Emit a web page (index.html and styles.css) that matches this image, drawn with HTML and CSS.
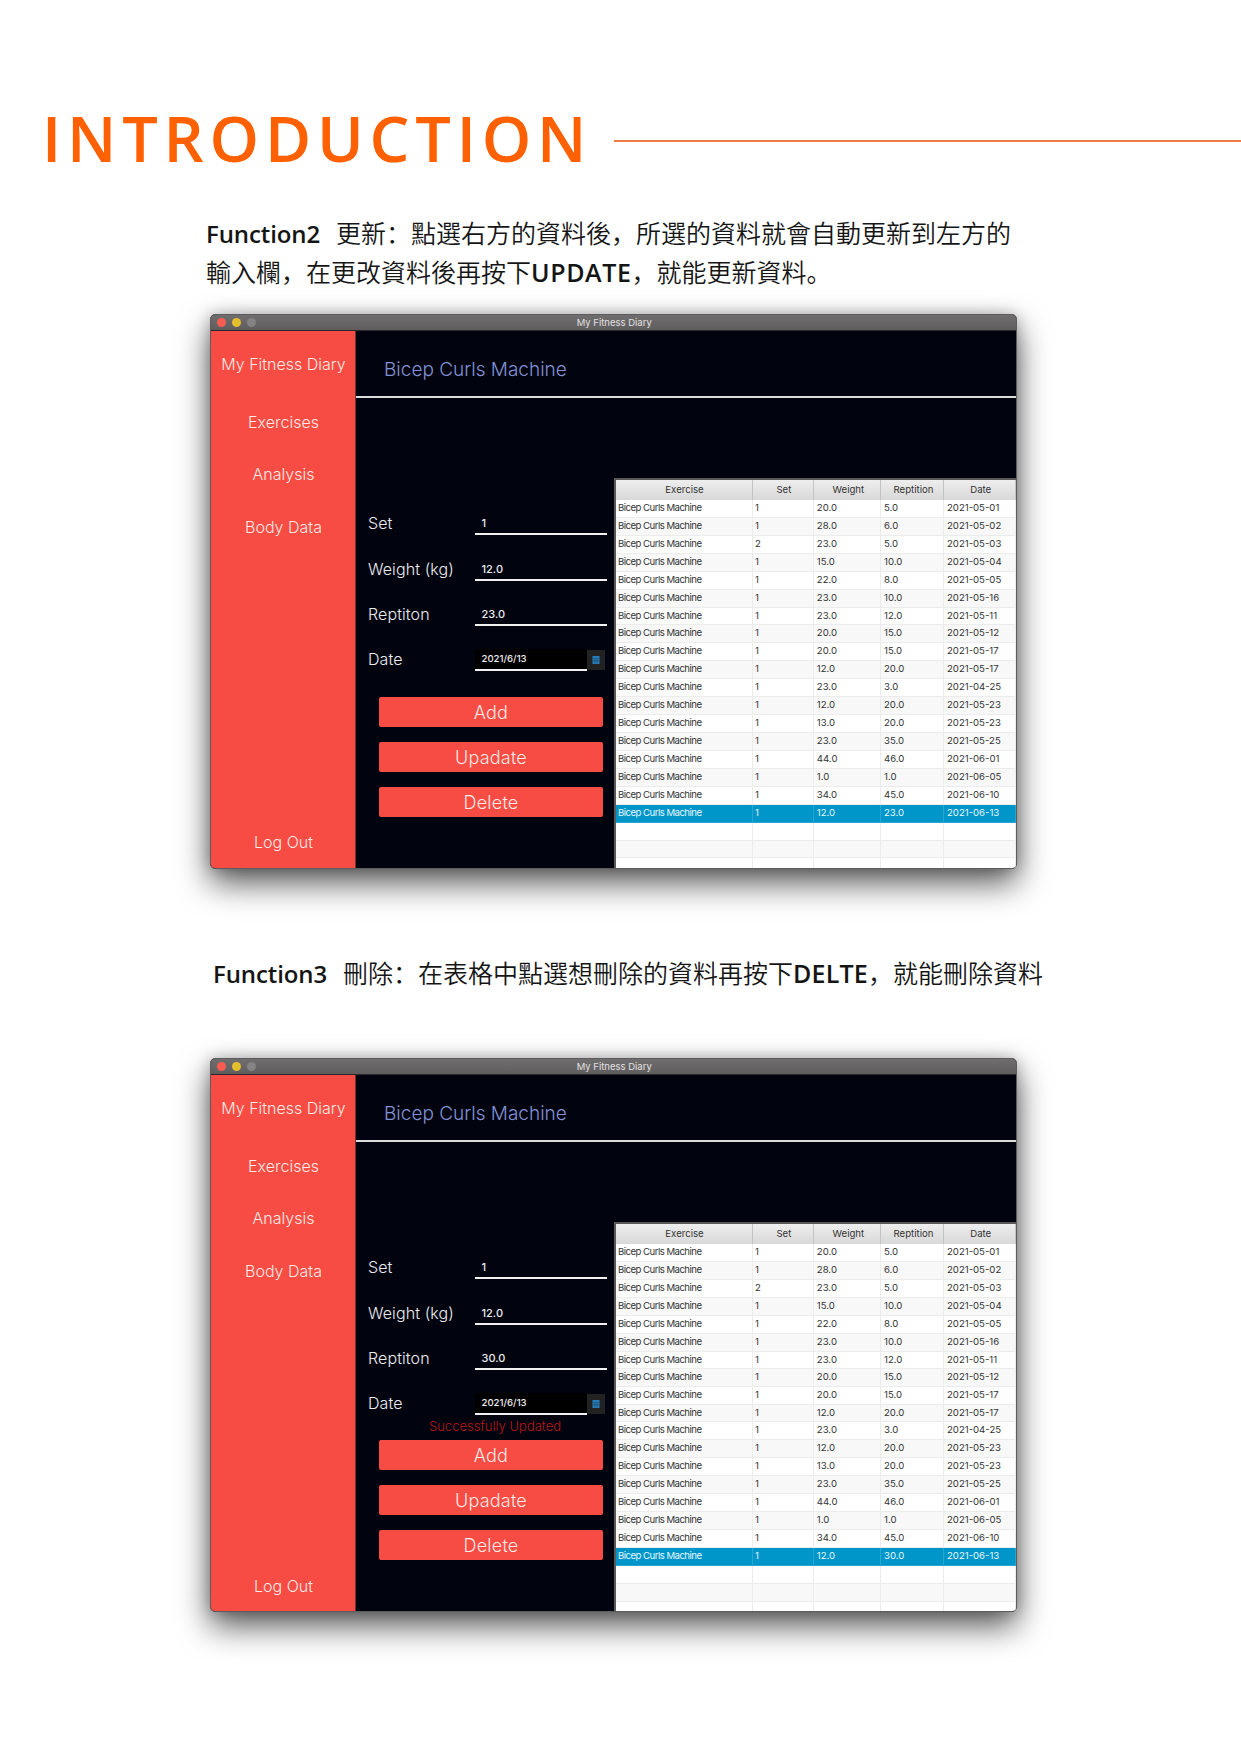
FILE: index.html
```
<!DOCTYPE html>
<html lang="zh-Hans">
<head>
<meta charset="utf-8">
<title>Introduction</title>
<link rel="stylesheet" href="styles.css">
</head>
<body>
<header class="heading"><h1>INTRODUCTION</h1><div class="rule"></div></header>

<p class="caption first"><span class="line"><b class="fn">Function2</b>更新：點選右方的資料後，所選的資料就會自動更新到左方的</span><span class="line">輸入欄，在更改資料後再按下<b class="update">UPDATE</b>，就能更新資料。</span></p>

<section class="window">
  <div class="titlebar"><i class="dot red"></i><i class="dot yellow"></i><i class="dot gray"></i><span class="title">My Fitness Diary</span></div>
  <div class="body">
    <nav class="sidebar"><a class="brand">My Fitness Diary</a><a>Exercises</a><a>Analysis</a><a>Body Data</a><a class="logout">Log Out</a></nav>
    <main class="main">
      <h2><span>Bicep Curls Machine</span></h2>
      <div class="content">
        <div class="form">
          <div class="field"><label>Set</label><span class="input">1</span></div>
          <div class="field"><label>Weight (kg)</label><span class="input">12.0</span></div>
          <div class="field"><label>Reptiton</label><span class="input">23.0</span></div>
          <div class="field date"><label>Date</label><span class="input">2021/6/13</span><span class="picker"><svg width="8" height="8" viewBox="0 0 8 8"><path fill="#267fbd" d="M.5 0h7v8h-7z"/><path stroke="#1c4868" stroke-width=".6" d="M1 2.4h6M1 4.8h6M3 2.4V7.5M5.2 2.4V7.5"/></svg></span></div>
          <p class="status"></p>
          <div class="button">Add</div><div class="button">Upadate</div><div class="button">Delete</div>
        </div>
        <table class="log">
          <thead><tr><th>Exercise</th><th>Set</th><th>Weight</th><th>Reptition</th><th>Date</th></tr></thead>
          <tbody>
            <tr><td>Bicep Curls Machine</td><td>1</td><td>20.0</td><td>5.0</td><td>2021-05-01</td></tr>
            <tr><td>Bicep Curls Machine</td><td>1</td><td>28.0</td><td>6.0</td><td>2021-05-02</td></tr>
            <tr><td>Bicep Curls Machine</td><td>2</td><td>23.0</td><td>5.0</td><td>2021-05-03</td></tr>
            <tr><td>Bicep Curls Machine</td><td>1</td><td>15.0</td><td>10.0</td><td>2021-05-04</td></tr>
            <tr><td>Bicep Curls Machine</td><td>1</td><td>22.0</td><td>8.0</td><td>2021-05-05</td></tr>
            <tr><td>Bicep Curls Machine</td><td>1</td><td>23.0</td><td>10.0</td><td>2021-05-16</td></tr>
            <tr><td>Bicep Curls Machine</td><td>1</td><td>23.0</td><td>12.0</td><td>2021-05-11</td></tr>
            <tr><td>Bicep Curls Machine</td><td>1</td><td>20.0</td><td>15.0</td><td>2021-05-12</td></tr>
            <tr><td>Bicep Curls Machine</td><td>1</td><td>20.0</td><td>15.0</td><td>2021-05-17</td></tr>
            <tr><td>Bicep Curls Machine</td><td>1</td><td>12.0</td><td>20.0</td><td>2021-05-17</td></tr>
            <tr><td>Bicep Curls Machine</td><td>1</td><td>23.0</td><td>3.0</td><td>2021-04-25</td></tr>
            <tr><td>Bicep Curls Machine</td><td>1</td><td>12.0</td><td>20.0</td><td>2021-05-23</td></tr>
            <tr><td>Bicep Curls Machine</td><td>1</td><td>13.0</td><td>20.0</td><td>2021-05-23</td></tr>
            <tr><td>Bicep Curls Machine</td><td>1</td><td>23.0</td><td>35.0</td><td>2021-05-25</td></tr>
            <tr><td>Bicep Curls Machine</td><td>1</td><td>44.0</td><td>46.0</td><td>2021-06-01</td></tr>
            <tr><td>Bicep Curls Machine</td><td>1</td><td>1.0</td><td>1.0</td><td>2021-06-05</td></tr>
            <tr><td>Bicep Curls Machine</td><td>1</td><td>34.0</td><td>45.0</td><td>2021-06-10</td></tr>
            <tr class="selected"><td>Bicep Curls Machine</td><td>1</td><td>12.0</td><td>23.0</td><td>2021-06-13</td></tr>
            <tr><td></td><td></td><td></td><td></td><td></td></tr>
            <tr><td></td><td></td><td></td><td></td><td></td></tr>
            <tr><td></td><td></td><td></td><td></td><td></td></tr>
          </tbody>
        </table>
      </div>
    </main>
  </div>
</section>

<p class="caption second"><span class="line"><b class="fn">Function3</b>刪除：在表格中點選想刪除的資料再按下<b class="delte">DELTE</b>，就能刪除資料</span></p>

<section class="window updated">
  <div class="titlebar"><i class="dot red"></i><i class="dot yellow"></i><i class="dot gray"></i><span class="title">My Fitness Diary</span></div>
  <div class="body">
    <nav class="sidebar"><a class="brand">My Fitness Diary</a><a>Exercises</a><a>Analysis</a><a>Body Data</a><a class="logout">Log Out</a></nav>
    <main class="main">
      <h2><span>Bicep Curls Machine</span></h2>
      <div class="content">
        <div class="form">
          <div class="field"><label>Set</label><span class="input">1</span></div>
          <div class="field"><label>Weight (kg)</label><span class="input">12.0</span></div>
          <div class="field"><label>Reptiton</label><span class="input">30.0</span></div>
          <div class="field date"><label>Date</label><span class="input">2021/6/13</span><span class="picker"><svg width="8" height="8" viewBox="0 0 8 8"><path fill="#267fbd" d="M.5 0h7v8h-7z"/><path stroke="#1c4868" stroke-width=".6" d="M1 2.4h6M1 4.8h6M3 2.4V7.5M5.2 2.4V7.5"/></svg></span></div>
          <p class="status">Successfully Updated</p>
          <div class="button">Add</div><div class="button">Upadate</div><div class="button">Delete</div>
        </div>
        <table class="log">
          <thead><tr><th>Exercise</th><th>Set</th><th>Weight</th><th>Reptition</th><th>Date</th></tr></thead>
          <tbody>
            <tr><td>Bicep Curls Machine</td><td>1</td><td>20.0</td><td>5.0</td><td>2021-05-01</td></tr>
            <tr><td>Bicep Curls Machine</td><td>1</td><td>28.0</td><td>6.0</td><td>2021-05-02</td></tr>
            <tr><td>Bicep Curls Machine</td><td>2</td><td>23.0</td><td>5.0</td><td>2021-05-03</td></tr>
            <tr><td>Bicep Curls Machine</td><td>1</td><td>15.0</td><td>10.0</td><td>2021-05-04</td></tr>
            <tr><td>Bicep Curls Machine</td><td>1</td><td>22.0</td><td>8.0</td><td>2021-05-05</td></tr>
            <tr><td>Bicep Curls Machine</td><td>1</td><td>23.0</td><td>10.0</td><td>2021-05-16</td></tr>
            <tr><td>Bicep Curls Machine</td><td>1</td><td>23.0</td><td>12.0</td><td>2021-05-11</td></tr>
            <tr><td>Bicep Curls Machine</td><td>1</td><td>20.0</td><td>15.0</td><td>2021-05-12</td></tr>
            <tr><td>Bicep Curls Machine</td><td>1</td><td>20.0</td><td>15.0</td><td>2021-05-17</td></tr>
            <tr><td>Bicep Curls Machine</td><td>1</td><td>12.0</td><td>20.0</td><td>2021-05-17</td></tr>
            <tr><td>Bicep Curls Machine</td><td>1</td><td>23.0</td><td>3.0</td><td>2021-04-25</td></tr>
            <tr><td>Bicep Curls Machine</td><td>1</td><td>12.0</td><td>20.0</td><td>2021-05-23</td></tr>
            <tr><td>Bicep Curls Machine</td><td>1</td><td>13.0</td><td>20.0</td><td>2021-05-23</td></tr>
            <tr><td>Bicep Curls Machine</td><td>1</td><td>23.0</td><td>35.0</td><td>2021-05-25</td></tr>
            <tr><td>Bicep Curls Machine</td><td>1</td><td>44.0</td><td>46.0</td><td>2021-06-01</td></tr>
            <tr><td>Bicep Curls Machine</td><td>1</td><td>1.0</td><td>1.0</td><td>2021-06-05</td></tr>
            <tr><td>Bicep Curls Machine</td><td>1</td><td>34.0</td><td>45.0</td><td>2021-06-10</td></tr>
            <tr class="selected"><td>Bicep Curls Machine</td><td>1</td><td>12.0</td><td>30.0</td><td>2021-06-13</td></tr>
            <tr><td></td><td></td><td></td><td></td><td></td></tr>
            <tr><td></td><td></td><td></td><td></td><td></td></tr>
            <tr><td></td><td></td><td></td><td></td><td></td></tr>
          </tbody>
        </table>
      </div>
    </main>
  </div>
</section>
</body>
</html>
```
FILE: styles.css
```
* { box-sizing: border-box; }
html, body { margin: 0; }
body {
  height: 1755px;
  padding-top: 100px;
  overflow: hidden;
  background: #fff;
  font-family: Inter, "Noto Sans CJK TC", sans-serif;
}
.heading { display: flex; align-items: center; height: 80px; padding-left: 42px; }
h1 {
  flex: none;
  width: 571.5px;
  margin: -4px 0 0;
  color: #ff6002;
  font: 600 63px/80px "Open Sans", sans-serif;
  letter-spacing: 5.8px;
  white-space: nowrap;
}
.rule { flex: 1; height: 2px; margin-top: 2px; background: #ed7d43; }

.caption { margin: 0; color: #151515; font: 350 25px/39px "Noto Sans CJK SC", sans-serif; }
.caption .line { display: block; height: 39px; white-space: nowrap; }
.caption b { font-family: "Open Sans", sans-serif; font-weight: 600; font-size: 24px; }
.caption .fn { display: inline-block; width: 130px; letter-spacing: -.1px; }
.caption .update { font-size: 25px; letter-spacing: .6px; }
.caption .delte { font-size: 25px; letter-spacing: .2px; }
.caption.first { height: 134px; padding: 33px 0 0 206px; }
.caption.second { height: 189px; padding: 84px 0 0 213px; }

.window {
  width: 807px;
  height: 555px;
  margin-left: 210px;
  overflow: hidden;
  border: 1px solid #5d5b5d;
  border-radius: 5px;
  background: #01040f;
  box-shadow: 0 14px 32px rgba(0, 0, 0, .66), 0 0 14px rgba(0, 0, 0, .22);
}
.window.updated { height: 554px; }
.titlebar {
  display: flex;
  align-items: center;
  gap: 6px;
  height: 16px;
  padding-left: 5.5px;
  border-bottom: 1px solid #2c2626;
  background: linear-gradient(#706d6e, #605d5e);
}
.dot { flex: none; width: 9px; height: 9px; border-radius: 50%; }
.red { background: #fb5b50; }
.yellow { background: #e3bf2e; }
.gray { background: #858384; }
.title { flex: 1; padding-right: 49px; text-align: center; color: #e2e0e1; font-size: 9.5px; line-height: 15px; }
.body { display: flex; height: 537px; }
.sidebar {
  display: flex;
  flex-direction: column;
  flex: none;
  width: 145px;
  padding: 65.5px 0 0 1px;
  border-right: 1px solid #7a2a2b;
  background: #f74c43;
  color: #ffe9e6;
  font-size: 16px;
  font-weight: 300;
  text-align: center;
}
.sidebar a { height: 52.3px; line-height: 52px; white-space: nowrap; }
.sidebar .brand { margin-top: -58.5px; height: 58px; }
.sidebar .logout { margin-top: auto; }
.main { flex: 1; min-width: 0; }
h2 {
  height: 67px;
  margin: 0;
  padding-left: 28px;
  border-bottom: 2px solid #dcdcdf;
  color: #8392d6;
  font-size: 19px;
  font-weight: 300;
  line-height: 77px;
}
.content { display: flex; height: 470px; }
.form { flex: none; width: 257.5px; padding: 96px 0 0 12px; color: #ececef; }
.field { display: flex; align-items: flex-end; height: 45.8px; }
.field.date { height: 44.8px; }
.field label { width: 106.5px; height: 34px; font-size: 16px; font-weight: 300; line-height: 34px; letter-spacing: .1px; white-space: nowrap; }
.field .input {
  width: 132px;
  height: 29px;
  margin-bottom: 5px;
  padding-left: 7px;
  border-bottom: 2px solid #f1f1f2;
  font-size: 11px;
  font-weight: 500;
  line-height: 35px;
}
.field.date .input { width: 112px; height: 22px; padding-left: 7px; background: #000; font-size: 9.6px; line-height: 20px; }
.picker { display: flex; align-items: center; justify-content: center; width: 18.5px; height: 20px; margin-bottom: 6px; background: #222223; }
.status { height: 21px; margin: 0 0 0 11px; color: #b91519; font-size: 13px; font-weight: 300; line-height: 12px; text-align: center; width: 232px; }
.updated .status { height: 20px; }
.button {
  width: 224px;
  height: 30px;
  margin: 0 0 14.7px 11px;
  border-radius: 2px;
  background: #f74c43;
  color: #ffe9e6;
  font-size: 18px;
  font-weight: 300;
  line-height: 31px;
  letter-spacing: .2px;
  text-align: center;
}

.log {
  display: block;
  flex: none;
  width: 402.5px;
  height: 391px;
  margin-top: 80px;
  overflow: hidden;
  border-top: 2px solid #5b5859;
  border-left: 2px solid #5b5859;
  background: #fff;
  color: #333;
  font-size: 9.6px;
}
.log thead, .log tbody { display: block; }
.log tr { display: grid; grid-template-columns: 137px 61.8px 67.2px 63px 1fr; height: 17.93px; }
.log thead tr { height: 20px; background: linear-gradient(#eee, #d8d8d8); }
.log th { padding: 0 0 0 2px; border-right: 1px solid #c4c4c4; font-weight: 400; line-height: 20px; }
.log td { padding: 0 0 0 2.5px; border-right: 1px solid #ececec; border-bottom: 1px solid #ececec; line-height: 16px; white-space: nowrap; }
.log td:first-child { letter-spacing: -.53px; }
.log tbody tr:nth-child(even) { background: #f8f8f8; }
.log tbody tr.selected { background: #0096c9; color: #e8f7fc; }
.log .selected td { border-color: #28a5d1; }
.updated tbody tr:nth-child(7) { height: 17.2px; }
```
